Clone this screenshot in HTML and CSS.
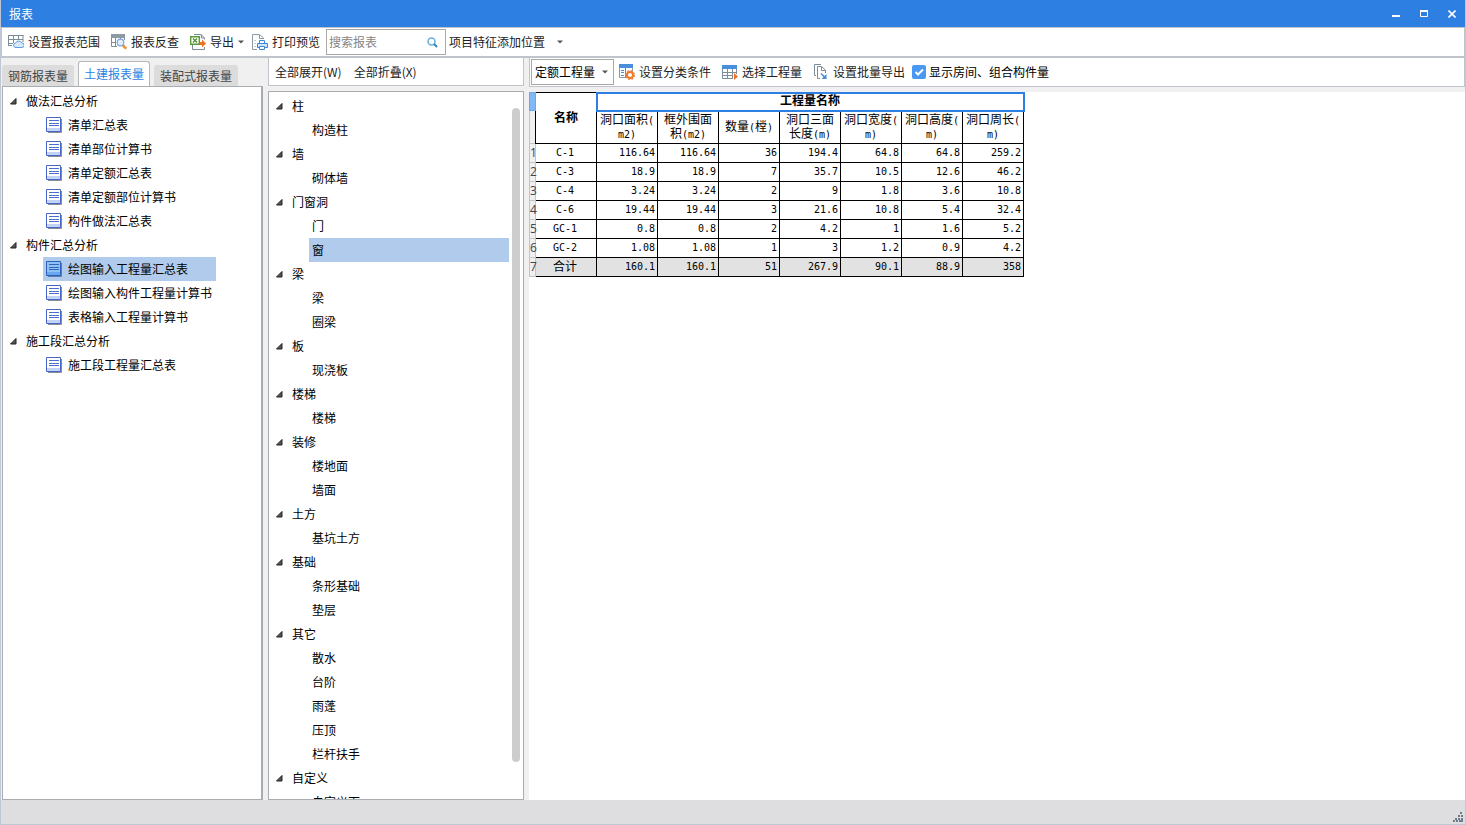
FILE: index.html
```
<!DOCTYPE html>
<html lang="zh-CN">
<head>
<meta charset="utf-8">
<title>报表</title>
<link rel="stylesheet" href="styles.css">
</head>
<body>
<svg class="defs" aria-hidden="true">
  <symbol id="doc" viewBox="0 0 16 16">
    <path d="M2 15.500H15.500V2" fill="none" stroke="#8a8a94"/>
    <path d="M.5.5h14v14H.5z" fill="#fff" stroke="#4667c8"/>
    <path d="M1 11h13v3H1z" fill="#c3d2fb"/>
    <path d="M3 3.500h10M3 6.500h10M3 8.500h10" stroke="#4a6fce"/>
  </symbol>
  <symbol id="doc-on" viewBox="0 0 16 16">
    <path d="M2 15.500H15.500V2" fill="none" stroke="#5b7fb0"/>
    <path d="M.5.5h14v14H.5z" fill="#8fc1f5" stroke="#2e5fb8"/>
    <path d="M1 11h13v3H1z" fill="#6ba7ee"/>
    <path d="M3 3.500h10M3 6.500h10M3 8.500h10" stroke="#2c66bd"/>
  </symbol>
  <symbol id="fold" viewBox="0 0 7 7"><path d="M6 .5V6H.5z" fill="#555" stroke="#222"/></symbol>
  <symbol id="down" viewBox="0 0 6 4"><path d="M0 .5h6L3 3.500z" fill="#555"/></symbol>
</svg>

<header class="titlebar">
  <h1 class="title">报表</h1>
  <div class="window-buttons">
    <button type="button" aria-label="最小化"><svg width="8" height="8"><path d="M0 6h8" stroke="#fff" stroke-width="2"/></svg></button>
    <button type="button" aria-label="最大化"><svg width="8" height="8"><path d="M.5 1v5.500h7V1" fill="none" stroke="#fff"/><path d="M0 1h8" stroke="#fff" stroke-width="2"/></svg></button>
    <button type="button" aria-label="关闭"><svg width="8" height="8"><path d="M.5.5l7 7M7.500.5l-7 7" stroke="#fff" stroke-width="1.600"/></svg></button>
  </div>
</header>

<div class="toolbar main-toolbar">
  <button type="button" class="tool">
    <svg width="16" height="16" fill="none"><path d="M0 1.500h15.500M.5 1v11M0 5.500h15M0 9.500h5M0 11.500h4M5.500 1v8M10.500 1v5M15 1v7" stroke="#7d8d97"/><path d="M8 13.500a2.200 2.200 0 0 1-.5-4.400 3.600 3.600 0 0 1 6.500 0 2.200 2.200 0 0 1 0 4.400z" fill="#d6e9fb" stroke="#5b9fe0"/></svg>
    设置报表范围</button>
  <button type="button" class="tool">
    <svg width="16" height="16" fill="none"><path d="M0 0h14v4H0z" fill="#8c9aa3"/><path d="M.5 4v8.500H6M13.500 4v2M4.500 4v9M9.500 4v1M0 8.500h5" stroke="#7d8d97"/><circle cx="9.500" cy="8.500" r="3.300" fill="#e4effc" stroke="#7aa5de" stroke-width="1.200"/><path d="M12 11.500l3.200 3.200" stroke="#f0912c" stroke-width="2.600"/></svg>
    报表反查</button>
  <button type="button" class="tool">
    <svg width="16" height="16" fill="none"><path d="M4 .5h7L14.500 4v1.500M11.500 .5v3.500h3M2.500 11v4.500h12V13" stroke="#7d8d97"/><path d="M.7 2.700h8.600v7.600H.7z" fill="#fff" stroke="#5b9a3c" stroke-width="1.400"/><path d="M3 4.500l4 4M7 4.500l-4 4" stroke="#5b9a3c" stroke-width="1.600"/><path d="M10 8h2V5.500L16 9.500l-4 4V11h-2z" fill="#f0702a"/></svg>
    导出
    <svg class="caret" width="6" height="4"><use href="#down"/></svg></button>
  <button type="button" class="tool">
    <svg width="16" height="16" fill="none"><path d="M5 15.500H.5V.5h7L11.500 4v1M7.500 1v3.500h4" stroke="#8c9aa3"/><path d="M2.500 6.500h1M2.500 9.500h1M2.500 12.500h1" stroke="#8c9aa3"/><path d="M7.500 9V6.500h5V9" fill="#fff" stroke="#3c86dc"/><path d="M5.500 9.500h10v4h-10z" fill="#cfe3fb" stroke="#3c86dc"/><path d="M7.500 12.500h5v3h-5z" fill="#fff" stroke="#3c86dc"/></svg>
    打印预览</button>
  <div class="search">
    <input type="text" placeholder="搜索报表" aria-label="搜索报表">
    <button type="button" aria-label="搜索"><svg width="11" height="11" fill="none"><circle cx="4.500" cy="4.500" r="3.500" stroke="#6bb2dc" stroke-width="1.600"/><path d="M7 7l3 3" stroke="#2f86b8" stroke-width="2"/></svg></button>
  </div>
  <button type="button" class="tool feature">项目特征添加位置
    <svg class="caret" width="6" height="4"><use href="#down"/></svg></button>
</div>

<main class="workspace">
  <section class="reports">
    <div class="tabs" role="tablist">
      <button type="button" role="tab" class="tab">钢筋报表量</button>
      <button type="button" role="tab" class="tab active" aria-selected="true">土建报表量</button>
      <button type="button" role="tab" class="tab">装配式报表量</button>
    </div>
    <nav class="panel report-tree" aria-label="报表">
      <button type="button" class="branch"><svg width="7" height="7"><use href="#fold"/></svg>做法汇总分析</button>
      <button type="button" class="leaf"><svg width="16" height="16"><use href="#doc"/></svg>清单汇总表</button>
      <button type="button" class="leaf"><svg width="16" height="16"><use href="#doc"/></svg>清单部位计算书</button>
      <button type="button" class="leaf"><svg width="16" height="16"><use href="#doc"/></svg>清单定额汇总表</button>
      <button type="button" class="leaf"><svg width="16" height="16"><use href="#doc"/></svg>清单定额部位计算书</button>
      <button type="button" class="leaf"><svg width="16" height="16"><use href="#doc"/></svg>构件做法汇总表</button>
      <button type="button" class="branch"><svg width="7" height="7"><use href="#fold"/></svg>构件汇总分析</button>
      <button type="button" class="leaf selected"><svg width="16" height="16"><use href="#doc-on"/></svg>绘图输入工程量汇总表</button>
      <button type="button" class="leaf"><svg width="16" height="16"><use href="#doc"/></svg>绘图输入构件工程量计算书</button>
      <button type="button" class="leaf"><svg width="16" height="16"><use href="#doc"/></svg>表格输入工程量计算书</button>
      <button type="button" class="branch"><svg width="7" height="7"><use href="#fold"/></svg>施工段汇总分析</button>
      <button type="button" class="leaf"><svg width="16" height="16"><use href="#doc"/></svg>施工段工程量汇总表</button>
    </nav>
  </section>

  <section class="components">
    <div class="toolbar fold-toolbar">
      <button type="button" class="tool">全部展开(W)</button>
      <button type="button" class="tool">全部折叠(X)</button>
    </div>
    <div class="panel component-panel">
      <nav class="component-tree" aria-label="构件">
        <button type="button" class="branch"><svg width="7" height="7"><use href="#fold"/></svg>柱</button>
        <button type="button" class="leaf">构造柱</button>
        <button type="button" class="branch"><svg width="7" height="7"><use href="#fold"/></svg>墙</button>
        <button type="button" class="leaf">砌体墙</button>
        <button type="button" class="branch"><svg width="7" height="7"><use href="#fold"/></svg>门窗洞</button>
        <button type="button" class="leaf">门</button>
        <button type="button" class="leaf selected">窗</button>
        <button type="button" class="branch"><svg width="7" height="7"><use href="#fold"/></svg>梁</button>
        <button type="button" class="leaf">梁</button>
        <button type="button" class="leaf">圈梁</button>
        <button type="button" class="branch"><svg width="7" height="7"><use href="#fold"/></svg>板</button>
        <button type="button" class="leaf">现浇板</button>
        <button type="button" class="branch"><svg width="7" height="7"><use href="#fold"/></svg>楼梯</button>
        <button type="button" class="leaf">楼梯</button>
        <button type="button" class="branch"><svg width="7" height="7"><use href="#fold"/></svg>装修</button>
        <button type="button" class="leaf">楼地面</button>
        <button type="button" class="leaf">墙面</button>
        <button type="button" class="branch"><svg width="7" height="7"><use href="#fold"/></svg>土方</button>
        <button type="button" class="leaf">基坑土方</button>
        <button type="button" class="branch"><svg width="7" height="7"><use href="#fold"/></svg>基础</button>
        <button type="button" class="leaf">条形基础</button>
        <button type="button" class="leaf">垫层</button>
        <button type="button" class="branch"><svg width="7" height="7"><use href="#fold"/></svg>其它</button>
        <button type="button" class="leaf">散水</button>
        <button type="button" class="leaf">台阶</button>
        <button type="button" class="leaf">雨蓬</button>
        <button type="button" class="leaf">压顶</button>
        <button type="button" class="leaf">栏杆扶手</button>
        <button type="button" class="branch"><svg width="7" height="7"><use href="#fold"/></svg>自定义</button>
        <button type="button" class="leaf">自定义面</button>
      </nav>
      <div class="scrollbar"><div class="thumb"></div></div>
    </div>
  </section>

  <section class="sheet">
    <div class="toolbar sheet-toolbar">
      <div class="picker">
        <select aria-label="工程量类型"><option>定额工程量</option></select>
        <svg class="caret" width="6" height="4"><use href="#down"/></svg>
      </div>
      <button type="button" class="tool">
        <svg width="16" height="16" fill="none"><path d="M.5.5h13v13H.5z" fill="#fff" stroke="#8c9aa3"/><path d="M0 0h14v4H0z" fill="#4a8fdc"/><path d="M2 6.500h3M2 8.500h3M2 11.500h3M6.500 4v9" stroke="#4a8fdc"/><circle cx="11" cy="11" r="3" fill="#fff" stroke="#f0792c" stroke-width="2"/><circle cx="11" cy="11" r="4.300" stroke="#f0792c" stroke-width="1.400" stroke-dasharray="1.700 1.700"/></svg>
        设置分类条件</button>
      <button type="button" class="tool">
        <svg width="16" height="16" fill="none"><path d="M0 1h15v4H0z" fill="#4a8fdc"/><path d="M.5 5v9.500H11M5.500 5v9.500M10.500 5v9.500M14.500 5v5M0 8.500h15M0 11.500h11" stroke="#7d8d97"/><path d="M12 9l4 3.500-4 3.500z" fill="#f0702a"/></svg>
        选择工程量</button>
      <button type="button" class="tool">
        <svg width="16" height="16" fill="none"><path d="M3 11.500H1.500v-11H8M7 14.500H4.500v-12h4l4 3.500v3M8.500 3v3.500H12" stroke="#7d8d97"/><path d="M8 9.500l4 4" stroke="#4a8fdc" stroke-width="1.600"/><path d="M13.500 10v5h-5z" fill="#4a8fdc"/></svg>
        设置批量导出</button>
      <label class="check"><input type="checkbox" checked>显示房间、组合构件量</label>
    </div>
    <div class="grid">
      <table>
        <colgroup><col class="index-col"><col span="8"></colgroup>
        <thead>
          <tr class="caption-row"><th class="corner"></th><th rowspan="2" class="strong">名称</th><th colspan="7" class="strong focus">工程量名称</th></tr>
          <tr class="head-row"><th class="index"></th><th>洞口面积<i>(</i><br><i>m2)</i></th><th>框外围面<br>积<i>(m2)</i></th><th>数量<i>(</i>樘<i>)</i></th><th>洞口三面<br>长度<i>(m)</i></th><th>洞口宽度<i>(</i><br><i>m)</i></th><th>洞口高度<i>(</i><br><i>m)</i></th><th>洞口周长<i>(</i><br><i>m)</i></th></tr>
        </thead>
        <tbody>
          <tr><th class="index">1</th><td>C-1</td><td>116.64</td><td>116.64</td><td>36</td><td>194.4</td><td>64.8</td><td>64.8</td><td>259.2</td></tr>
          <tr><th class="index">2</th><td>C-3</td><td>18.9</td><td>18.9</td><td>7</td><td>35.7</td><td>10.5</td><td>12.6</td><td>46.2</td></tr>
          <tr><th class="index">3</th><td>C-4</td><td>3.24</td><td>3.24</td><td>2</td><td>9</td><td>1.8</td><td>3.6</td><td>10.8</td></tr>
          <tr><th class="index">4</th><td>C-6</td><td>19.44</td><td>19.44</td><td>3</td><td>21.6</td><td>10.8</td><td>5.4</td><td>32.4</td></tr>
          <tr><th class="index">5</th><td>GC-1</td><td>0.8</td><td>0.8</td><td>2</td><td>4.2</td><td>1</td><td>1.6</td><td>5.2</td></tr>
          <tr><th class="index">6</th><td>GC-2</td><td>1.08</td><td>1.08</td><td>1</td><td>3</td><td>1.2</td><td>0.9</td><td>4.2</td></tr>
          <tr class="total"><th class="index">7</th><td class="word">合计</td><td>160.1</td><td>160.1</td><td>51</td><td>267.9</td><td>90.1</td><td>88.9</td><td>358</td></tr>
        </tbody>
      </table>
    </div>
  </section>
</main>

<footer class="statusbar">
  <svg width="10" height="10" fill="#6f7c8a"><path d="M7 0h2v2H7zM5 3h2v2H5zM8 3h2v2H8zM2 6h2v2H2zM5 6h2v2H5zM8 6h2v2H8zM0 8h2v2H0zM3 8h2v2H3zM6 8h2v2H6zM8 8h2v2H8z"/></svg>
</footer>
</body>
</html>
```
FILE: styles.css
```
* {
  box-sizing: border-box;
}

body {
  margin: 0;
  height: 100vh;
  display: flex;
  flex-direction: column;
  overflow: hidden;
  background: #f0f0f0;
  border: 1px solid #bfc6d4;
  border-top: 0;
  color: #000;
  font: 12px/16px "Noto Sans CJK SC", sans-serif;
}

button,
input,
select {
  font: inherit;
  color: inherit;
  margin: 0;
  padding: 0;
  border: 0;
  background: none;
  white-space: nowrap;
}

.defs {
  display: none;
}

svg {
  flex: none;
  display: block;
}

.titlebar {
  flex: none;
  display: flex;
  align-items: center;
  justify-content: space-between;
  height: 27px;
  padding: 0 9px;
  margin: 0 -1px;
  background: #2d80e2;
  color: #fff;
}

.title {
  margin: 0;
  font: inherit;
}

.window-buttons {
  display: flex;
  gap: 20px;
  padding-right: 1px;
}

.toolbar {
  flex: none;
  display: flex;
  align-items: center;
  gap: 3px;
  background: #fff;
  border: 1px solid #c0c4cb;
}

.main-toolbar {
  height: 31px;
  padding-left: 2px;
  border-bottom-width: 2px;
}

.tool {
  display: flex;
  align-items: center;
  gap: 4px;
  height: 22px;
  padding: 0 4px;
  color: #222;
}

.main-toolbar .tool:nth-child(3) {
  padding-right: 1px;
}

.main-toolbar .tool:nth-child(4) {
  padding-right: 3px;
}

.search {
  display: flex;
  align-items: center;
  width: 120px;
  height: 26px;
  padding-right: 7px;
  border: 1px solid #a9a9a9;
}

.search input {
  flex: 1;
  min-width: 0;
  padding-left: 2px;
  outline: 0;
}

.search input::placeholder {
  color: #858585;
}

.feature {
  gap: 12px;
  padding-left: 0;
}

.workspace {
  flex: 1;
  min-height: 0;
  display: grid;
  grid-template-columns: 261px 256px 1fr;
  column-gap: 5px;
  padding-left: 1px;
}

.reports,
.components,
.sheet {
  display: flex;
  flex-direction: column;
  min-width: 0;
  min-height: 0;
}

.panel {
  flex: 1;
  min-height: 0;
  background: #fff;
  border: 1px solid #a9acb1;
}

.tabs {
  display: flex;
  align-items: flex-end;
  gap: 4px;
  height: 28px;
}

.tab {
  height: 21px;
  padding: 0 6px;
  background: #dcdcdc;
  border-radius: 3px 3px 0 0;
  color: #444;
}

.tab.active {
  height: 25px;
  padding: 0 5px;
  background: #fff;
  border: 1px solid #b4b7bc;
  border-bottom: 0;
  color: #2d80e2;
}

.report-tree {
  display: grid;
  grid-template-columns: max-content;
  align-content: start;
  padding: 2px 0 0 7px;
  border-width: 1px 2px 1px 1px;
}

.branch,
.leaf {
  display: flex;
  align-items: center;
  height: 24px;
  text-align: left;
}

.branch {
  gap: 9px;
}

.report-tree .leaf {
  gap: 6px;
  margin-left: 33px;
  padding: 0 4px 0 3px;
}

.selected {
  background: #b1cbed;
}

.fold-toolbar {
  height: 28px;
  gap: 4px;
  padding-left: 2px;
  margin-bottom: 5px;
  border-top: 0;
}

.component-panel {
  display: flex;
  padding-left: 7px;
  overflow: hidden;
}

.component-tree {
  flex: 1;
  display: flex;
  flex-direction: column;
  padding-top: 2px;
}

.component-tree .branch,
.component-tree .leaf {
  flex: none;
}

.component-tree .leaf {
  margin-left: 33px;
  padding-left: 3px;
}

.scrollbar {
  width: 8px;
  margin: 16px 3px 0;
}

.thumb {
  height: calc(100% - 37px);
  border-radius: 4px;
  background: #cdcdcd;
}

.sheet-toolbar {
  height: 29px;
  padding-left: 1px;
  border-top: 0;
}

.picker {
  display: flex;
  align-items: center;
  width: 83px;
  height: 26px;
  padding-right: 5px;
  margin-right: -2px;
  border: 1px solid #a9a9a9;
}

.picker select {
  flex: 1;
  min-width: 0;
  padding-left: 3px;
  appearance: none;
  outline: 0;
}

.check {
  display: flex;
  align-items: center;
  gap: 3px;
}

.check input {
  width: 14px;
  height: 14px;
  appearance: none;
  border-radius: 2px;
  background: #4a98f2 url("data:image/svg+xml,%3Csvg xmlns='http://www.w3.org/2000/svg' viewBox='0 0 14 14'%3E%3Cpath d='M3.500 7l2.500 2.500L11 4.500' fill='none' stroke='white' stroke-width='2'/%3E%3C/svg%3E");
}

.grid {
  flex: 1;
  min-height: 0;
  margin-top: 5px;
  background: #fff;
}

table {
  width: 495px;
  table-layout: fixed;
  border-collapse: collapse;
}

.index-col {
  width: 6px;
}

th,
td {
  height: 19px;
  padding: 0 2px 0 0;
  border: 1px solid #000;
}

th {
  padding: 0 0 2px;
  font-weight: 400;
  line-height: 14px;
}

td {
  font: 10px/14px "DejaVu Sans Mono", monospace;
  text-align: right;
}

td:nth-child(2) {
  text-align: center;
}

th i {
  font: 10px/10px "DejaVu Sans Mono", monospace;
}

.strong {
  padding-bottom: 3px;
  font-weight: 700;
}

.caption-row th {
  height: 18px;
}

.head-row th {
  height: 33px;
}

.focus {
  outline: 2px solid #2d80e2;
  outline-offset: -1px;
}

.index,
.corner {
  padding: 0;
  border-color: #c4c4c4;
  background: #f0f0f0;
  color: #444;
  font: 12px/16px "Open Sans", sans-serif;
}

.corner {
  background: #80b8f8;
  border-color: #6aa8ee;
}

.total td {
  background: #e2e2e2;
}

.total .word {
  padding-bottom: 2px;
  font: 12px/14px "Noto Sans CJK SC", sans-serif;
}

.statusbar {
  flex: none;
  display: flex;
  align-items: flex-end;
  justify-content: flex-end;
  height: 24px;
  padding: 0 2px 2px 0;
  background: #dedee0;
}
```
